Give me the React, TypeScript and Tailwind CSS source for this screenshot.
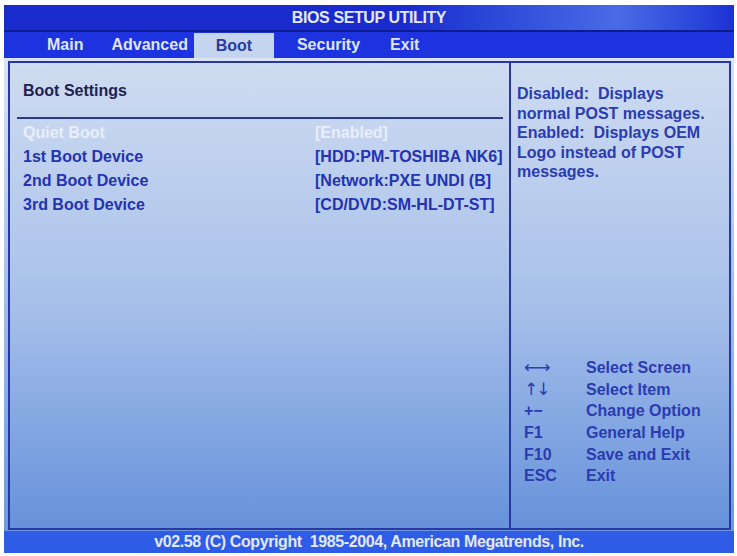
import React from 'react';

// left offset of each menu label, measured from the previous one
const tabs = [
  { name: 'Main', ml: 'ml-[43px]' },
  { name: 'Advanced', ml: 'ml-[28px]' },
  { name: 'Boot', ml: 'ml-[6px]' },
  { name: 'Security', ml: 'ml-[23px]' },
  { name: 'Exit', ml: 'ml-[30px]' },
];

const items = [
  { label: 'Quiet Boot', value: '[Enabled]', active: true },
  { label: '1st Boot Device', value: '[HDD:PM-TOSHIBA NK6]' },
  { label: '2nd Boot Device', value: '[Network:PXE UNDI (B]' },
  { label: '3rd Boot Device', value: '[CD/DVD:SM-HL-DT-ST]' },
];

// arrow glyphs are tiny in Liberation Sans, so those use DejaVu
const arrowFont = "font-['DejaVu_Sans',sans-serif] font-normal text-[17px] tracking-[-2px]";

const keys = [
  { key: '←→', label: 'Select Screen', cls: arrowFont },
  { key: '↑↓', label: 'Select Item', cls: arrowFont },
  { key: '+−', label: 'Change Option', cls: '' },
  { key: 'F1', label: 'General Help', cls: '' },
  { key: 'F10', label: 'Save and Exit', cls: '' },
  { key: 'ESC', label: 'Exit', cls: '' },
];

const App = () => {
  return (
    <div className="w-[737px] h-[556px] bg-white pt-[5px] pl-[4px] font-['Liberation_Sans',Arial,sans-serif] font-bold text-[16px]">
      <div className="w-[730px] flex flex-col">
        {/* title bar */}
        <div className="h-[25px] flex items-center justify-center bg-linear-to-r from-[#1a2bce] from-55% via-[#4a6ae6] via-[84%] to-[#1d31d4] text-[#e2e8f6] tracking-tight">
          BIOS SETUP UTILITY
        </div>
        <div className="h-[2px] bg-[#0e1a90]" />

        {/* menu tabs */}
        <div className="h-[26px] bg-[#1d33e0] flex items-stretch">
          {tabs.map((t) => (
            <div
              key={t.name}
              className={
                t.name === 'Boot'
                  ? `${t.ml} w-[80px] mt-[1px] flex items-center justify-center bg-[#c6d5ef] text-[#2b3b9c]`
                  : `${t.ml} flex items-center text-[#dfe5f6]`
              }
            >
              {t.name}
            </div>
          ))}
        </div>

        {/* main frame */}
        <div className="h-[473px] bg-linear-to-b from-[#dbe4f4] to-[#6f99dc] pt-[3px] pl-[4px] pr-[3px] pb-[1px]">
          <div className="h-full flex border-2 border-[#2738a6] bg-linear-to-b from-[#cfdcf1] via-[#a9c1ea] to-[#6692db]">
            <div className="w-[499px] pl-[13px] pr-[6px] pt-[18px]">
              <div className="text-[#1e2252] leading-[20px]">Boot Settings</div>
              <div className="h-[2px] bg-[#2a3990] mt-[16px] ml-[-6px]" />
              <div className="mt-[2px]">
                {items.map((it) => (
                  <div
                    key={it.label}
                    className={`flex h-[24px] items-center ${it.active ? 'text-[#e9eef9]' : 'text-[#2333b2]'}`}
                  >
                    <div className="w-[292px]">{it.label}</div>
                    <div>{it.value}</div>
                  </div>
                ))}
              </div>
            </div>

            <div className="w-[2px] bg-[#2738a6]" />

            {/* help pane */}
            <div className="flex-1 flex flex-col pl-[6px] pt-[21px] pb-[41px] text-[#2b3bb0]">
              <div className="leading-[19.5px]">
                <div>Disabled:&nbsp; Displays</div>
                <div>normal POST messages.</div>
                <div>Enabled:&nbsp; Displays OEM</div>
                <div>Logo instead of POST</div>
                <div>messages.</div>
              </div>
              <div className="mt-auto pl-[7px]">
                {keys.map((k) => (
                  <div key={k.key} className="flex h-[21.6px] items-center">
                    <div className={`w-[62px] ${k.cls}`}>{k.key}</div>
                    <div>{k.label}</div>
                  </div>
                ))}
              </div>
            </div>
          </div>
        </div>

        {/* footer */}
        <div className="h-[22px] bg-[#2f5ce6] flex items-center justify-center text-[#e2e8f6] tracking-tight">
          v02.58 (C) Copyright&nbsp; 1985-2004, American Megatrends, Inc.
        </div>
      </div>
    </div>
  );
};

export default App;
